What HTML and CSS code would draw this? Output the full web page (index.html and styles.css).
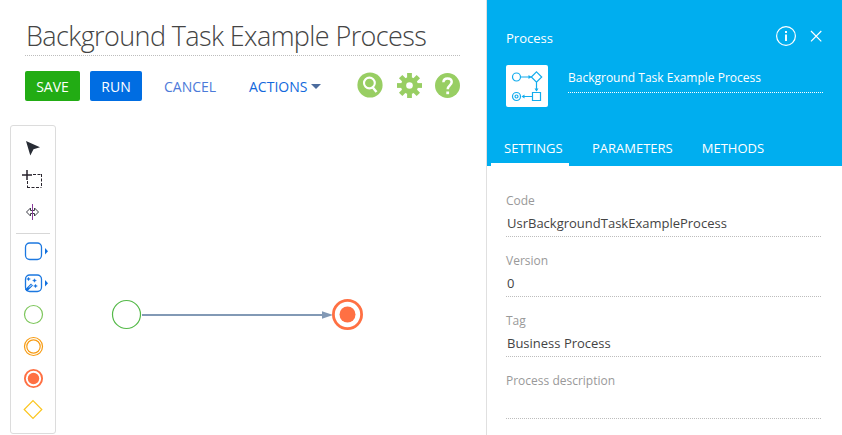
FILE: index.html
```html
<!DOCTYPE html>
<html lang="en">
<head>
<meta charset="utf-8">
<title>Background Task Example Process</title>
<link rel="stylesheet" href="styles.css">
</head>
<body>
<div class="app">
  <main class="designer">
    <h1 class="title"><span>Background Task Example Process</span></h1>
    <div class="actions">
      <button class="btn save">SAVE</button>
      <button class="btn run">RUN</button>
      <button class="link cancel">CANCEL</button>
      <button class="link menu">ACTIONS<svg width="10" height="5" viewBox="0 0 10 5"><path d="M0 0h10L5 5z" fill="#4b6c9e"/></svg></button>
      <div class="icons">
        <svg width="26" height="26" viewBox="0 0 26 26"><circle cx="13" cy="13" r="12.6" fill="#98ce63"/><circle cx="12.400" cy="11" r="5.400" fill="none" stroke="#fff" stroke-width="2.100"/><path d="M15 14.500l4.500 5.500" stroke="#fff" stroke-width="2.400"/></svg>
        <svg width="26" height="26" viewBox="0 0 26 26"><g fill="#98ce63"><circle cx="13.500" cy="13.500" r="8.600"/><path id="tooth" d="M11.100 1h4.800v25h-4.800z"/><use href="#tooth" transform="rotate(45 13.500 13.500)"/><use href="#tooth" transform="rotate(90 13.500 13.500)"/><use href="#tooth" transform="rotate(135 13.500 13.500)"/></g><circle cx="13.500" cy="13.500" r="3.300" fill="#fff"/></svg>
        <svg width="26" height="26" viewBox="0 0 26 26"><circle cx="12.500" cy="13.500" r="12.500" fill="#98ce63"/><path d="M8.400 10.200C8.500 7.800 10.100 6.500 12.500 6.500s4.200 1.400 4.200 3.600c0 3.200-4 3.300-4 7.100" fill="none" stroke="#fff" stroke-width="2.500"/><path d="M11.300 19.500h2.800v2.700h-2.800z" fill="#fff"/></svg>
      </div>
    </div>
    <div class="workspace">
      <div class="toolbox">
        <svg viewBox="0 0 44 32"><path d="M15 9l14 6.300-6.500 2-3.200 6.200z" fill="#282c35"/></svg>
        <svg viewBox="0 0 44 32"><path d="M16 6v10M11 11h10" stroke="#28232c" stroke-width="1.500"/><path d="M22 10.500h9M30.500 10v14M16.500 17v6M16 23.500h14" fill="none" stroke="#28232c" stroke-dasharray="3 1.500"/></svg>
        <svg viewBox="0 0 44 32"><path d="M15.500 16l4-4v2.500h4V12l4 4-4 4v-2.500h-4V20z" fill="#fff" stroke="#3b3b45"/><path d="M21.500 8v16" stroke="#8a3d9b"/></svg>
        <div class="divider"></div>
        <svg viewBox="0 0 44 32"><rect x="14.500" y="8" width="16" height="16.500" rx="4.200" fill="#fff" stroke="#1c78e0" stroke-width="1.300"/><path d="M34 13l3 3.200-3 3.200z" fill="#1070df"/></svg>
        <svg viewBox="0 0 44 32"><rect x="14.500" y="8" width="16" height="16.500" rx="4.200" fill="#fff" stroke="#1c78e0" stroke-width="1.300"/><path d="M34 13l3 3.200-3 3.200z" fill="#1070df"/><path d="M15 23.500l6-6" stroke="#1070df" stroke-width="2.800"/><path d="M18 20.500l2.800-2.800" stroke="#fff"/><g fill="#1070df"><path id="star" d="M17.500 10.200l.6 1.300 1.300.5-1.300.5-.6 1.300-.6-1.300-1.300-.5 1.300-.5z" stroke="#1070df" stroke-width=".4"/><use href="#star" x="6" y="1.500"/><use href="#star" x="7" y="7"/></g></svg>
        <svg viewBox="0 0 44 32"><circle cx="22.500" cy="15.500" r="9" fill="#fff" stroke="#7dc65b" stroke-width="1.200"/></svg>
        <svg viewBox="0 0 44 32"><circle cx="22.500" cy="15.500" r="9" fill="#fff" stroke="#f79b12" stroke-width="1.200"/><circle cx="22.500" cy="15.500" r="6.700" fill="#fff" stroke="#f79b12" stroke-width="1.200"/></svg>
        <svg viewBox="0 0 44 32"><circle cx="22.500" cy="15.500" r="8.600" fill="#fff" stroke="#ff7043" stroke-width="1.900"/><circle cx="22.500" cy="15.500" r="5.700" fill="#ff7043"/></svg>
        <svg viewBox="0 0 44 32"><path d="M22 5.700l8.800 8.800-8.800 8.800-8.800-8.800z" fill="#fff" stroke="#fbc51e" stroke-width="1.200"/></svg>
      </div>
      <svg class="diagram" viewBox="0 0 260 40" width="260" height="40"><circle cx="16.500" cy="19.500" r="14" fill="#fff" stroke="#54b948" stroke-width="1.200"/><path d="M32 20h182" stroke="#8299b5" stroke-width="2"/><path d="M212 16.200l11 3.800-11 3.800z" fill="#8299b5"/><circle cx="237.500" cy="19.500" r="14.100" fill="#fff" stroke="#ff7043" stroke-width="2.800"/><circle cx="237.500" cy="19.500" r="8" fill="#ff7043"/></svg>
    </div>
  </main>
  <aside class="panel">
    <header class="head">
      <div class="top"><span>Process</span>
        <svg width="48" height="22" viewBox="0 0 48 22" fill="none" stroke="#fff"><circle cx="11" cy="11" r="9.400" stroke-width="1.200"/><path d="M11 9.500v6.500M11 6v2" stroke-width="1.900"/><path d="M36 6l10.300 10.300M46.300 6L36 16.300" stroke-width="1.200"/></svg>
      </div>
      <div class="identity">
        <svg width="42" height="42" viewBox="0 0 42 42"><rect width="42" height="42" rx="2" fill="#fff"/><g fill="none" stroke="#13aced" stroke-width="1.200"><circle cx="10.500" cy="12" r="4"/><path d="M15 12h10M30.500 6.800l5.200 5.200-5.200 5.200-5.200-5.200zM30.500 17v9M26.500 27.500h8v8h-8zM26 31.500h-9"/><circle cx="10.500" cy="31.500" r="4"/><circle cx="10.500" cy="31.500" r="1.500"/></g><path d="M22.500 10l3 2-3 2zM28.500 23.500l2 3 2-3zM18.500 29.500l-3 2 3 2z" fill="#13aced"/></svg>
        <div class="name"><span>Background Task Example Process</span></div>
      </div>
      <nav class="tabs"><a class="tab active">SETTINGS</a><a class="tab params">PARAMETERS</a><a class="tab">METHODS</a></nav>
    </header>
    <div class="form">
      <div class="field"><label>Code</label><div class="value">UsrBackgroundTaskExampleProcess</div></div>
      <div class="field"><label>Version</label><div class="value">0</div></div>
      <div class="field"><label>Tag</label><div class="value">Business Process</div></div>
      <div class="field description"><label>Process description</label><div class="value"></div></div>
    </div>
  </aside>
</div>
</body>
</html>
```
FILE: styles.css
```css
* { box-sizing: border-box; }
body { margin: 0; overflow: hidden; background: #fff; font: 13px/18px "Open Sans", sans-serif; color: #444; }
svg { display: block; flex: none; }
.app { display: flex; width: 842px; height: 435px; }
.designer { width: 486px; flex: none; }
.title, .value, .name {
  background: repeating-linear-gradient(90deg, #bdbdbd 0 1px, transparent 1px 2px) bottom / 100% 1px no-repeat;
}
.title { margin: 0 0 0 25px; width: 436px; height: 56px; padding: 17px 0 0 1px; font-size: 27px; line-height: 38px; font-weight: 300; letter-spacing: -0.61px; white-space: nowrap; }
.actions { display: flex; margin: 15px 0 0 25px; height: 30px; align-items: center; }
button { border: 0; padding: 2px 0 0; font: 14px/28px "Open Sans", sans-serif; height: 30px; text-align: center; white-space: nowrap; }
.btn { color: #fff; border-radius: 2px; }
.save { width: 55px; background: #22ac14; }
.run { width: 52px; margin-left: 10px; background: #006de2; }
.link { background: none; text-align: left; color: #4c7ad9; }
.cancel { margin-left: 22px; width: 85px; }
.menu { display: flex; align-items: center; gap: 4px; color: #1268dc; width: 108px; }
.menu svg { margin-top: -1px; }
.icons { display: flex; gap: 13px; margin-top: -2px; }
.workspace { display: flex; margin: 24px 0 0 10px; }
.toolbox { width: 46px; height: 309px; border: 1px solid #dcdcdc; border-radius: 3px; padding-top: 6px; flex: none; }
.toolbox svg { width: 44px; height: 32px; }
.divider { height: 1px; background: #d7d7d7; margin: 5px 5px 1px; }
.diagram { margin: 170px 0 0 54px; }
.panel { width: 356px; flex: none; border-left: 1px solid #e0e0e0; }
.head { height: 166px; background: #00aeef; color: #fff; overflow: hidden; }
.top { display: flex; justify-content: space-between; margin: 25px 19px 0 19px; height: 22px; }
.top span { margin-top: 4px; }
.identity { display: flex; margin: 18px 0 0 19px; gap: 20px; }
.name { width: 255px; height: 28px; padding-top: 4px; font-size: 12px; background-image: repeating-linear-gradient(90deg, #fff 0 1px, transparent 1px 2px); }
.tabs { display: flex; margin: 27px 0 0 4px; height: 32px; }
.tab { line-height: 28px; }
.active { width: 78px; padding-left: 13px; border-bottom: 3px solid #fff; }
.params { margin: 0 29px 0 23px; }
.form { padding: 25px 0 0 19px; }
.field { width: 316px; height: 60px; }
.field label { display: block; height: 20px; font-size: 12px; line-height: 20px; color: #999; }
.value { height: 26px; padding: 2px 0 0 1px; line-height: 20px; }
.description .value { height: 28px; }
```
